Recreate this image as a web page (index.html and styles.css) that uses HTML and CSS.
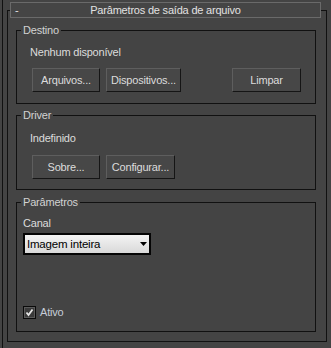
FILE: index.html
```html
<!DOCTYPE html>
<html lang="pt">
<head>
  <meta charset="utf-8">
  <title>Parâmetros de saída de arquivo</title>
  <link rel="stylesheet" href="styles.css">
</head>
<body>
  <div class="panel">
    <div class="rollout">
      <div class="rollout-title">
        <span class="toggle">-</span>
        <span class="title-text">Parâmetros de saída de arquivo</span>
        <span></span>
      </div>

      <fieldset class="group group-destino">
        <legend>Destino</legend>
        <div class="group-body">
          <div class="status">Nenhum disponível</div>
          <div class="btn-row">
            <button class="btn btn-arquivos">Arquivos...</button>
            <button class="btn btn-dispositivos">Dispositivos...</button>
            <button class="btn btn-limpar">Limpar</button>
          </div>
        </div>
      </fieldset>

      <fieldset class="group group-driver">
        <legend>Driver</legend>
        <div class="group-body">
          <div class="status">Indefinido</div>
          <div class="btn-row">
            <button class="btn btn-sobre">Sobre...</button>
            <button class="btn btn-configurar">Configurar...</button>
          </div>
        </div>
      </fieldset>

      <fieldset class="group group-params">
        <legend>Parâmetros</legend>
        <div class="group-body">
          <div class="field-label">Canal</div>
          <div class="dropdown">
            <span>Imagem inteira</span>
            <svg class="dropdown-arrow" width="7" height="4" viewBox="0 0 7 4"><polygon points="0,0 7,0 3.5,4" fill="#000"/></svg>
          </div>
          <label class="check-row">
            <svg class="checkbox" width="13" height="13" viewBox="0 0 13 13">
              <rect x="0.5" y="0.5" width="12" height="12" fill="#2e2e2e" stroke="#0a0a0a"/>
              <rect x="1.5" y="1.5" width="10" height="10" fill="#3a3a3a" stroke="#5a5a5a"/>
              <polyline points="3.5,6.5 5.5,9 9.5,3.5" fill="none" stroke="#e6e6e6" stroke-width="1.8"/>
            </svg>
            <span class="check-text">Ativo</span>
          </label>
        </div>
      </fieldset>
    </div>
  </div>
</body>
</html>
```

FILE: styles.css
```css
body {
  margin: 0;
  background-color: #444444;
  font-family: "Liberation Sans", Arial, sans-serif;
  font-size: 11px;
  letter-spacing: -0.2px;
  color: #dcdcdc;
}
.panel {
  box-sizing: border-box;
  height: 348px;
  margin-left: 2px;
  padding: 10px 4px 0 4px;
  border-left: 1px solid #111;
}
.rollout {
  border: 1px solid #111;
  padding-bottom: 9px;
}
.rollout-title {
  box-sizing: border-box;
  display: grid;
  grid-template-columns: 16px 1fr 16px;
  align-items: center;
  height: 16px;
  margin: -9px 5px 0 2px;
  border: 1px solid #6a6a6a;
  background-color: #454545;
  color: #e2e2e2;
  line-height: 14px;
}
.toggle {
  padding-left: 4px;
}
.title-text {
  text-align: center;
}
.group {
  margin: 5px 10px 0 8px;
  padding: 0;
  border: 1px solid #111;
  min-width: 0;
}
.group legend {
  margin-left: 4px;
  padding: 0 2px;
  line-height: 14px;
  color: #d2d2d2;
}
.group-driver {
  margin-top: 4px;
}
.group-params {
  margin-top: 5px;
}
.group-body {
  padding: 8px 14px 11px 15px;
}
.group-driver .group-body {
  padding-top: 9px;
  padding-bottom: 10px;
}
.status {
  margin-left: -2px;
  line-height: 14px;
}
.btn-row {
  display: flex;
  gap: 6px;
  margin-top: 9px;
}
.group-driver .btn-row {
  margin-top: 10px;
}
.btn {
  box-sizing: border-box;
  height: 24px;
  padding: 0;
  border: 1px solid;
  border-color: #5e5e5e #151515 #151515 #5e5e5e;
  background-color: #474747;
  color: #dcdcdc;
  font: inherit;
  letter-spacing: inherit;
}
.btn-arquivos { width: 68px; }
.btn-dispositivos { width: 75px; }
.btn-limpar { width: 69px; margin-left: auto; }
.btn-sobre { width: 68px; }
.btn-configurar { width: 69px; }

.group-params .group-body {
  padding: 7px 14px 12px 6px;
}
.field-label {
  line-height: 14px;
}
.dropdown {
  box-sizing: border-box;
  display: flex;
  align-items: center;
  justify-content: space-between;
  width: 128px;
  height: 22px;
  margin-top: 3px;
  padding: 0 2px 0 2px;
  border: 2px solid #050505;
  background: linear-gradient(#f4f4f4, #d9d9d9);
  color: #000;
  font-size: 11.5px;
}
.check-row {
  display: flex;
  align-items: center;
  gap: 4px;
  height: 14px;
  margin-top: 50px;
}
.check-text {
  color: #c6cdd8;
}
```
